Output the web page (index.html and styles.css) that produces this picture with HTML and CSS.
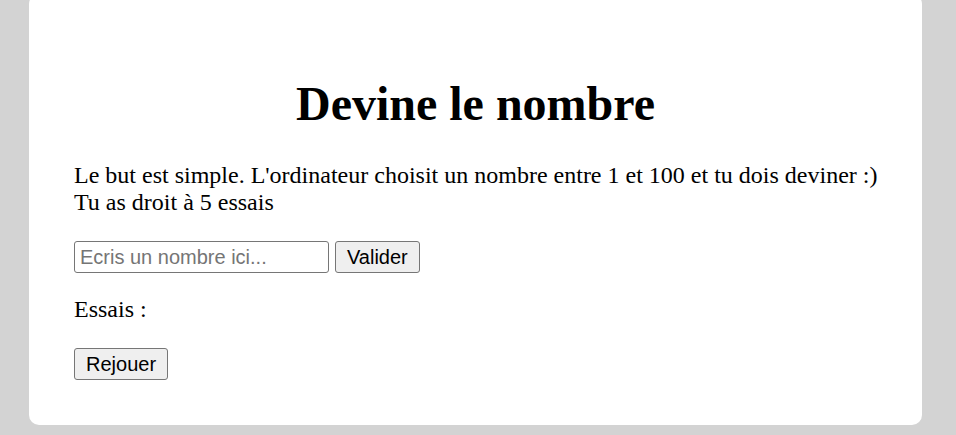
FILE: index.html
```html
<!DOCTYPE html>
<html lang="fr">
<head>
<meta charset="utf-8">
<title>Devine le nombre</title>
<link rel="stylesheet" href="styles.css">
</head>
<body>
<div class="card">
  <h1 class="title">Devine le nombre</h1>
  <p class="intro">Le but est simple. L'ordinateur choisit un nombre entre 1 et 100 et tu dois deviner :)<br>Tu as droit à 5 essais</p>
  <div class="row">
    <input class="field" type="text" placeholder="Ecris un nombre ici...">
    <button class="btn">Valider</button>
  </div>
  <p class="tries">Essais : </p>
  <div class="row">
    <button class="btn">Rejouer</button>
  </div>
</div>
</body>
</html>
```
FILE: styles.css
```css
html, body {
  margin: 0;
  padding: 0;
}
body {
  background: #d3d3d3;
  font-family: "Liberation Serif", "Times New Roman", serif;
  font-size: 24px;
  color: #000;
  height: 435px;
  overflow: hidden;
}
.card {
  background: #fff;
  width: 893px;
  box-sizing: border-box;
  margin: -6px 0 0 29px;
  padding: 82px 45px 45px 45px;
  border-radius: 10px;
}
.title {
  margin: 0;
  font-size: 48px;
  line-height: 56px;
  font-weight: bold;
  text-align: center;
}
.intro {
  margin: 30px 0 0 0;
  line-height: 27px;
  white-space: nowrap;
}
.row {
  display: flex;
  align-items: center;
  gap: 6px;
  margin-top: 25px;
}
.field {
  width: 255px;
  height: 32px;
  box-sizing: border-box;
  margin: 0;
  padding: 1px 5px;
  border: 1px solid #767676;
  border-radius: 3px;
  font-family: "Liberation Sans", Arial, sans-serif;
  font-size: 20px;
  color: #000;
  background: #fff;
}
.field::placeholder {
  color: #757575;
}
.btn {
  height: 32px;
  box-sizing: border-box;
  margin: 0;
  padding: 1px 11px;
  border: 1px solid #767676;
  border-radius: 3px;
  background: #efefef;
  font-family: "Liberation Sans", Arial, sans-serif;
  font-size: 20px;
  color: #000;
}
.tries {
  margin: 23px 0 0 0;
  line-height: 27px;
}
```
